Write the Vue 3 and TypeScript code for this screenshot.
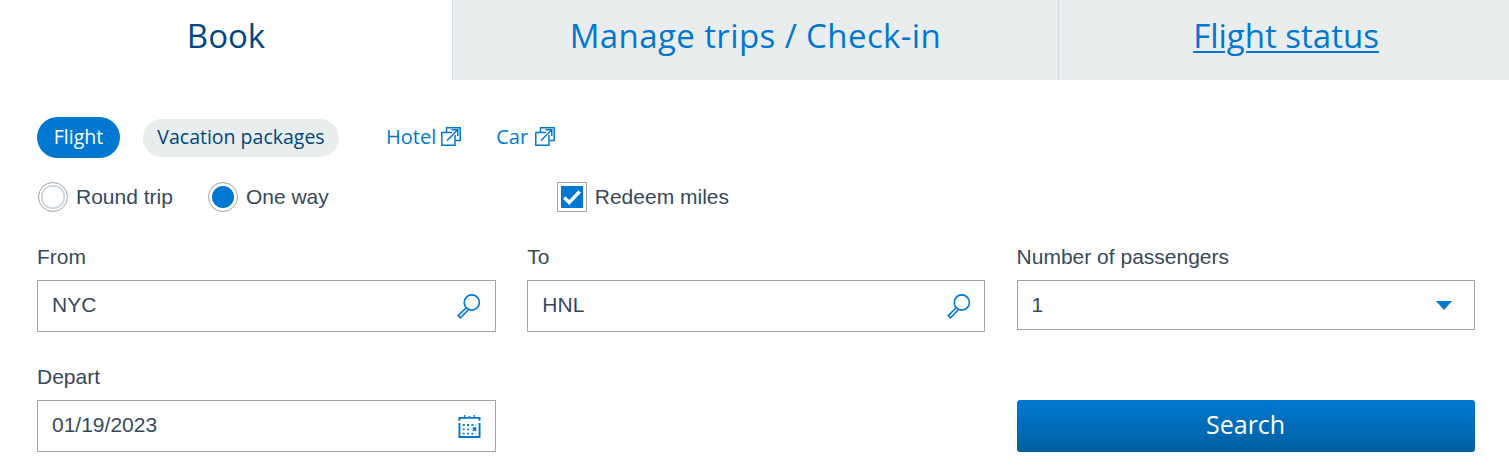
<script setup lang="ts">
const tabs = [
  { label: 'Book', cls: 'tab-book' },
  { label: 'Manage trips / Check-in', cls: 'tab-manage' },
  { label: 'Flight status', cls: 'tab-status' },
]
const links = ['Hotel', 'Car']
</script>

<template>
  <div class="page">
    <nav class="tabs">
      <div v-for="t in tabs" :key="t.label" class="tab" :class="t.cls">{{ t.label }}</div>
    </nav>

    <div class="content">
      <div class="types">
        <span class="pill pill-on">Flight</span>
        <span class="pill pill-off">Vacation packages</span>
        <a v-for="l in links" :key="l" class="ext" :class="'ext-' + l.toLowerCase()">
          {{ l }}
          <svg class="ext-icon" width="20" height="19" viewBox="0 0 20 19" fill="none" stroke="#0078d2" stroke-width="1.5">
            <path d="M5.5 5V0.8H19.2V13.5H14.5" />
            <path d="M11 5.5H0.8V18.2H14V8" />
            <path d="M6 13.5L16.5 3M10.5 2.8H16.8V9" />
          </svg>
        </a>
      </div>

      <div class="options">
        <label class="radio r-round"><span class="dot"></span>Round trip</label>
        <label class="radio r-one"><span class="dot dot-on"></span>One way</label>
        <label class="check">
          <span class="box">
            <svg width="22" height="22" viewBox="0 0 22 22" fill="none" stroke="#fff" stroke-width="3.4">
              <path d="M3.2 11.5l5 5 10.5-11" />
            </svg>
          </span>
          Redeem miles
        </label>
      </div>

      <div class="grid">
        <div class="field">
          <div class="label">From</div>
          <div class="input text-input">
            NYC
            <svg class="icon" width="26" height="26" viewBox="0 0 26 26" fill="none" stroke="#0078d2" stroke-width="1.6">
              <circle cx="15.8" cy="9.5" r="7.6" />
              <path d="M10.3 14.7L2.2 22.6l2.2 2.2 8-8" />
            </svg>
          </div>
        </div>
        <div class="field">
          <div class="label">To</div>
          <div class="input text-input">
            HNL
            <svg class="icon" width="26" height="26" viewBox="0 0 26 26" fill="none" stroke="#0078d2" stroke-width="1.6">
              <circle cx="15.8" cy="9.5" r="7.6" />
              <path d="M10.3 14.7L2.2 22.6l2.2 2.2 8-8" />
            </svg>
          </div>
        </div>
        <div class="field">
          <div class="label">Number of passengers</div>
          <div class="input select">
            1
            <span class="caret"></span>
          </div>
        </div>
        <div class="field">
          <div class="label">Depart</div>
          <div class="input text-input">
            01/19/2023
            <svg class="icon cal" width="23" height="27" viewBox="0 0 24 27" fill="none" stroke="#0078d2">
              <path d="M1.5 8.5V5.5H22.5V8.5" stroke-width="2" />
              <path d="M7 2.5v4M12 3.5v2M17 2.5v4" stroke-width="1.4" />
              <path d="M1.5 11v14.5h21V11" stroke-width="2" />
              <path d="M5 13h14M5 17.5h9M5 22h14" stroke-width="2" stroke-dasharray="2 2.5" />
              <path d="M15.5 15.5l3.5 3.5M19 15.5l-3.5 3.5" stroke-width="1.8" />
            </svg>
          </div>
        </div>
        <div class="field"></div>
        <div class="field">
          <div class="label">&nbsp;</div>
          <button class="search">Search</button>
        </div>
      </div>
    </div>
  </div>
</template>

<style>
html,
body {
  margin: 0;
  background: #fff;
}
</style>

<style scoped>
.page {
  width: 1509px;
  height: 467px;
  overflow: hidden;
  background: #fff;
  font-family: "Liberation Sans", Arial, sans-serif;
  color: #36495a;
}
.tabs {
  display: grid;
  grid-template-columns: 453px 605px 451px;
  height: 80px;
}
.tab {
  display: flex;
  align-items: center;
  justify-content: center;
  padding-bottom: 10px;
  box-sizing: border-box;
  font-family: "Open Sans", sans-serif;
  font-size: 33px;
  color: #0078d2;
  background: #e9edee;
  border-left: 1px solid #d0dae0;
}
.tab-book {
  background: #fff;
  color: #00467f;
  border-left: 0;
  border-right: 1px solid #d0dae0;
}
.tab-manage {
  border-left: 0;
  letter-spacing: 0.4px;
}
.tab-status {
  padding-left: 4px;
  text-decoration: underline;
  text-decoration-thickness: 2px;
  text-underline-offset: 3px;
}
.content {
  padding: 37px 34px 0 37px;
}
.types {
  display: flex;
  align-items: center;
  height: 41px;
  font-family: "Open Sans", sans-serif;
  font-size: 19.5px;
}
.pill {
  display: flex;
  align-items: center;
  justify-content: center;
  box-sizing: border-box;
  padding-bottom: 2px;
  border-radius: 21px;
}
.pill-on {
  width: 83px;
  height: 41px;
  background: #0078d2;
  color: #fff;
}
.pill-off {
  width: 196px;
  height: 38px;
  margin-left: 23px;
  background: #e9edee;
  color: #00467f;
}
.ext {
  display: flex;
  align-items: center;
  padding-bottom: 2px;
  color: #0078d2;
  font-size: 20px;
}
.ext-hotel {
  gap: 5px;
  margin-left: 47px;
}
.ext-car {
  gap: 7px;
  margin-left: 35px;
}
.options {
  display: flex;
  align-items: center;
  height: 30px;
  margin-top: 24px;
  font-size: 21px;
}
.radio,
.check {
  display: flex;
  align-items: center;
  gap: 8px;
}
.r-round {
  margin-left: 1px;
}
.r-one {
  margin-left: 35px;
}
.check {
  margin-left: 228px;
}
.dot {
  width: 30px;
  height: 30px;
  box-sizing: border-box;
  border: 1px solid #9da6ab;
  border-radius: 50%;
  background: radial-gradient(circle, #fff 0 10px, #d0dae0 10.5px 12px, #fff 12.5px);
}
.dot-on {
  background: radial-gradient(circle, #0078d2 0 10.5px, #fff 11.5px);
}
.box {
  display: flex;
  align-items: center;
  justify-content: center;
  width: 30px;
  height: 30px;
  box-sizing: border-box;
  border: 1px solid #9da6ab;
  background: #fff;
}
.box svg {
  background: #0078d2;
}
.grid {
  display: grid;
  grid-template-columns: 459px 458px 458px;
  column-gap: 31.3px;
  margin-top: 30px;
}
.field {
  height: 120px;
}
.label {
  height: 38px;
  font-size: 21px;
  line-height: 30px;
}
.input {
  position: relative;
  display: flex;
  align-items: center;
  height: 52px;
  box-sizing: border-box;
  padding-left: 14px;
  border: 1px solid #9da6ab;
  font-size: 21px;
  color: #36495a;
}
.text-input {
  padding-bottom: 2px;
}
.select {
  height: 50px;
  padding-left: 14px;
}
.icon {
  position: absolute;
  right: 12.7px;
  top: 12px;
}
.cal {
  right: 14px;
  top: 11px;
}
.caret {
  position: absolute;
  right: 22px;
  top: 20px;
  width: 0;
  height: 0;
  border-left: 8px solid transparent;
  border-right: 8px solid transparent;
  border-top: 9px solid #0078d2;
}
.search {
  display: block;
  width: 458px;
  height: 52px;
  padding: 0 0 4px;
  border: 0;
  border-radius: 3px;
  background: linear-gradient(#0078d2, #00609f);
  color: #fff;
  font-family: "Open Sans", sans-serif;
  font-size: 25px;
}
</style>
